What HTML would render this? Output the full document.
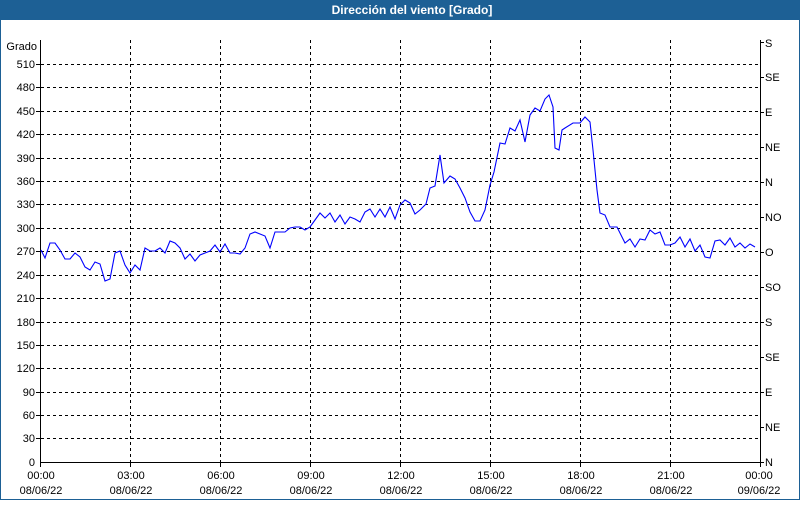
<!DOCTYPE html><html><head><meta charset="utf-8"><style>
html,body{margin:0;padding:0;}
body{width:800px;height:500px;overflow:hidden;background:#fff;font-family:"Liberation Sans",sans-serif;}
</style></head><body>
<svg width="800" height="500" viewBox="0 0 800 500" xmlns="http://www.w3.org/2000/svg" font-family="Liberation Sans, sans-serif" font-size="11">
<rect x="0" y="0" width="800" height="500" fill="#fff"/>
<rect x="0.5" y="0.5" width="799" height="499" fill="none" stroke="#1d6095"/>
<rect x="0" y="0" width="800" height="20" fill="#1d6095"/>
<text x="412" y="14" fill="#fff" font-weight="bold" font-size="12" text-anchor="middle">Dirección del viento [Grado]</text>
<g stroke="#000" stroke-dasharray="3,3" stroke-width="1">
<path d="M41 64.5H760M41 87.5H760M41 111.5H760M41 134.5H760M41 158.5H760M41 181.5H760M41 204.5H760M41 228.5H760M41 251.5H760M41 275.5H760M41 298.5H760M41 322.5H760M41 345.5H760M41 368.5H760M41 392.5H760M41 415.5H760M41 438.5H760"/>
<path d="M130.5 40V462M220.5 40V462M310.5 40V462M400.5 40V462M490.5 40V462M580.5 40V462M670.5 40V462"/>
</g>
<g stroke="#000" stroke-width="1" fill="none">
<path d="M40.5 40V462.5H760.5V40"/>
<path d="M36 64.5H41M36 87.5H41M36 111.5H41M36 134.5H41M36 158.5H41M36 181.5H41M36 204.5H41M36 228.5H41M36 251.5H41M36 275.5H41M36 298.5H41M36 322.5H41M36 345.5H41M36 368.5H41M36 392.5H41M36 415.5H41M36 438.5H41"/>
<path d="M760 42.5H764M760 77.5H764M760 112.5H764M760 147.5H764M760 182.5H764M760 217.5H764M760 252.5H764M760 287.5H764M760 322.5H764M760 357.5H764M760 392.5H764M760 427.5H764M760 462.5H764"/>
<path d="M40.5 462V467M130.5 462V467M220.5 462V467M310.5 462V467M400.5 462V467M490.5 462V467M580.5 462V467M670.5 462V467M760.5 462V467"/>
</g>
<g text-anchor="end" fill="#000">
<text x="37" y="50">Grado</text>
<text x="35" y="68">510</text><text x="35" y="91">480</text><text x="35" y="115">450</text><text x="35" y="138">420</text><text x="35" y="162">390</text><text x="35" y="185">360</text><text x="35" y="208">330</text><text x="35" y="232">300</text><text x="35" y="255">270</text><text x="35" y="279">240</text><text x="35" y="302">210</text><text x="35" y="326">180</text><text x="35" y="349">150</text><text x="35" y="372">120</text><text x="35" y="396">90</text><text x="35" y="419">60</text><text x="35" y="442">30</text><text x="35" y="466">0</text>
</g>
<g fill="#000">
<text x="765" y="47">S</text><text x="765" y="81">SE</text><text x="765" y="116">E</text><text x="765" y="151">NE</text><text x="765" y="186">N</text><text x="765" y="221">NO</text><text x="765" y="256">O</text><text x="765" y="291">SO</text><text x="765" y="326">S</text><text x="765" y="361">SE</text><text x="765" y="396">E</text><text x="765" y="431">NE</text><text x="765" y="466">N</text>
</g>
<g text-anchor="middle" fill="#000">
<text x="41" y="479">00:00</text><text x="41" y="494">08/06/22</text>
<text x="131" y="479">03:00</text><text x="131" y="494">08/06/22</text>
<text x="221" y="479">06:00</text><text x="221" y="494">08/06/22</text>
<text x="311" y="479">09:00</text><text x="311" y="494">08/06/22</text>
<text x="401" y="479">12:00</text><text x="401" y="494">08/06/22</text>
<text x="491" y="479">15:00</text><text x="491" y="494">08/06/22</text>
<text x="581" y="479">18:00</text><text x="581" y="494">08/06/22</text>
<text x="671" y="479">21:00</text><text x="671" y="494">08/06/22</text>
<text x="759" y="479">00:00</text><text x="759" y="494">09/06/22</text>
</g>
<polyline fill="none" stroke="#0000ff" stroke-width="1.1" points="41,250 45,258 50,243 55,243 60,250 65,259 70,259 75,253 80,257 85,267 90,270 95,262 100,264 105,281 110,279 115,253 120,251 125,265 130,273 135,265 140,270 145,248 150,251 155,251 160,248 165,253 170,241 175,243 180,248 185,259 190,254 195,261 200,255 205,253 210,251 215,245 220,252 225,244 230,253 235,253 240,254 245,248 250,234 255,232 260,234 265,236 270,248 275,232 280,232 285,232 290,228 295,227 300,227 305,230 310,227 315,220 320,213 325,218 330,213 335,222 340,215 345,224 350,217 355,219 360,222 365,212 370,209 375,217 380,209 385,217 390,207 395,219 400,205 405,200 410,203 415,214 420,210 426,204 430,188 435,186 440,155 444,183 450,176 455,179 460,188 465,198 470,212 475,221 480,221 485,210 490,185 494,172 500,143 505,144 510,128 515,131 520,120 525,142 530,115 535,108 540,111 545,99 549,95 553,107 555,148 559,150 562,130 565,128 573,123 580,123 585,117 590,122 593,150 597,190 600,213 605,215 610,227 617,227 625,243 630,239 635,247 640,239 645,240 650,230 655,234 660,232 665,245 670,245 675,243 680,237 685,247 690,239 695,251 700,245 705,257 710,258 715,241 720,240 725,245 730,238 735,247 740,243 745,248 750,244 755,247"/>
</svg>
</body></html>
